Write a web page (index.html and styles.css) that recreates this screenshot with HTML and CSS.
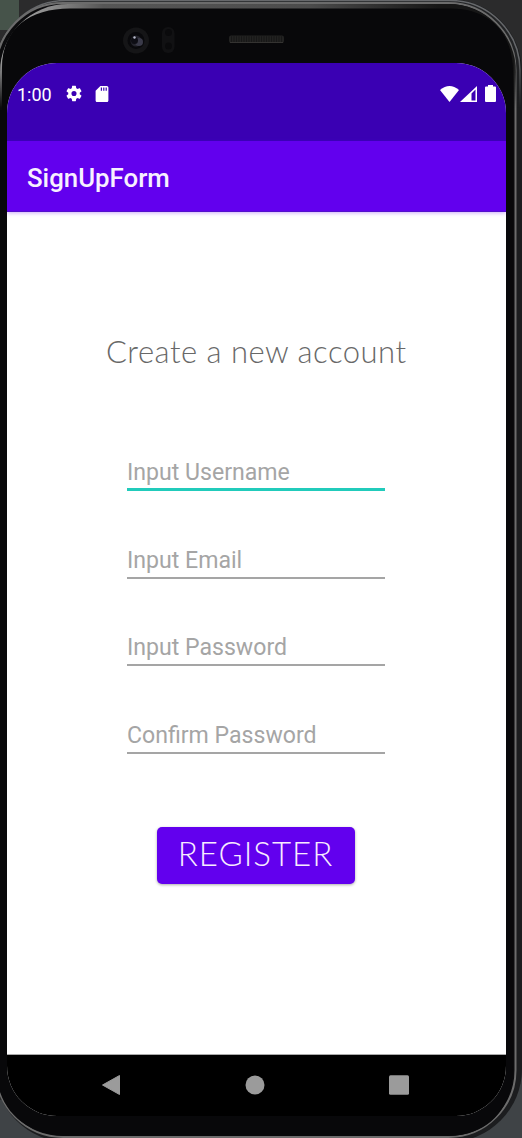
FILE: index.html
```html
<!DOCTYPE html>
<html lang="en">
<head>
<meta charset="utf-8">
<title>SignUpForm</title>
<link rel="stylesheet" href="styles.css">
</head>
<body>
<div class="device">
  <svg class="frame" viewBox="0 0 522 1138" aria-hidden="true">
    <defs>
      <linearGradient id="rim" x1="0" y1="0" x2="1" y2="0">
        <stop offset="0" stop-color="#aaa"/><stop offset=".1" stop-color="#8b8b8b"/><stop offset=".2" stop-color="#565656"/><stop offset=".6" stop-color="#4c4c4c"/><stop offset=".85" stop-color="#161616"/>
      </linearGradient>
      <linearGradient id="fade" x1="0" y1="0" x2="0" y2="1">
        <stop offset="0" stop-color="#fff"/><stop offset=".05" stop-color="#fff"/><stop offset=".095" stop-color="#000"/>
      </linearGradient>
      <mask id="top"><rect width="522" height="1138" fill="url(#fade)"/></mask>
    </defs>
    <rect width="522" height="1138" fill="#2b2b2c"/>
    <rect width="19" height="30" fill="#46534a"/>
    <path d="M0 1100H60V1138H0ZM470 1060H522V1138H470Z" fill="#3f4346"/>
    <rect x="-5" y="-1" width="527" height="1143" rx="73" fill="#1c1d1f"/>
    <rect x="-4" y=".5" width="524" height="1139" rx="70" fill="#232426" stroke="#66686b" stroke-width="1.500" mask="url(#top)"/>
    <rect x="-4" y="3" width="519.500" height="1134" rx="67" fill="#0b0b0d" stroke="#6c6c6c" stroke-width="2"/>
    <rect x="0" y="4" width="516" height="1133" rx="68" fill="url(#rim)" mask="url(#top)"/>
    <path d="M2 110V68C2 28 30 8.500 70 8.500H450C491 8.500 513 34 513 72V1066C513 1112 486 1136 446 1136H70C28 1136 -4 1112 -4 1066V110Z" fill="#08080a"/>
    <circle cx="136" cy="40.500" r="13" fill="#151517"/>
    <circle cx="136" cy="40.500" r="8.500" fill="#09090c"/>
    <circle cx="136" cy="41" r="5.500" fill="#24242c"/>
    <circle cx="139" cy="42" r="4" fill="#3a3a49"/>
    <circle cx="134.500" cy="40.500" r="3.500" fill="#0d0d14"/>
    <circle cx="134.500" cy="37.500" r="1.200" fill="#b9bccc"/>
    <rect x="162" y="27" width="12.500" height="26" rx="6" fill="#111113"/>
    <circle cx="168.500" cy="32.500" r="3.500" fill="#0a0a0c"/><circle cx="168.500" cy="46" r="3.500" fill="#0a0a0c"/>
    <rect x="229" y="35.500" width="55" height="7.500" rx="2" fill="#222221"/>
    <path d="M231 39.200H282" stroke="#171717" stroke-width="6" stroke-dasharray="1 1.500"/>
    <path d="M230 42.500H283" stroke="#343331"/>
  </svg>
  <main class="screen">
    <header class="status">
      <span class="clock">1:00</span>
      <svg class="gear" viewBox="2 2 20 20"><path fill="#fff" d="M19.140 12.940c.04-.3.060-.610.060-.940s-.02-.640-.07-.940l2.030-1.580a.49.49 0 0 0 .12-.610l-1.920-3.320a.488.488 0 0 0-.590-.220l-2.390.960c-.5-.380-1.030-.7-1.620-.940l-.360-2.540a.484.484 0 0 0-.480-.410h-3.840c-.240 0-.430.170-.470.410l-.360 2.540c-.590.240-1.130.570-1.620.940l-2.390-.960c-.220-.080-.470 0-.590.220L2.740 8.870c-.120.210-.080.470.120.610l2.030 1.580c-.05.3-.09.630-.09.940s.02.640.07.940l-2.030 1.580a.49.49 0 0 0-.12.610l1.920 3.320c.12.220.37.290.59.220l2.390-.96c.5.380 1.030.7 1.620.94l.36 2.540c.05.240.24.410.48.410h3.840c.24 0 .44-.17.47-.41l.36-2.540c.59-.24 1.130-.56 1.620-.94l2.390.96c.22.080.47 0 .59-.22l1.920-3.320a.49.49 0 0 0-.12-.61l-2.010-1.580zM12 15.200a3.200 3.200 0 1 1 0-6.400 3.200 3.200 0 0 1 0 6.400z"/></svg>
      <svg class="sd" viewBox="4 2 16 20"><path fill="#fff" d="M18 2h-8L4 8v12c0 1.100.9 2 2 2h12c1.100 0 2-.9 2-2V4c0-1.100-.9-2-2-2zm-6 6h-1.500V4H12v4zm3 0h-1.500V4H15v4zm3 0h-1.500V4H18v4z"/></svg>
      <span class="spacer"></span>
      <svg class="wifi" viewBox="0 0 19 16"><path fill="#fff" d="M0 4Q9.500-4 19 4L9.500 16Z"/></svg>
      <svg class="signal" viewBox="0 0 17 16"><path fill="#fff" fill-rule="evenodd" d="M0 16 17 0V16ZM11.500 7.500V14.500H15.500V3.500Z"/></svg>
      <svg class="battery" viewBox="0 0 11 17"><path fill="#fff" d="M3 0H8V1.500H10Q11 1.500 11 2.500V16Q11 17 10 17H1Q0 17 0 16V2.500Q0 1.500 1 1.500H3Z"/></svg>
    </header>
    <div class="appbar">SignUpForm</div>
    <form class="form">
      <h1 class="title">Create a new account</h1>
      <div class="field active">Input Username</div>
      <div class="field">Input Email</div>
      <div class="field">Input Password</div>
      <div class="field last">Confirm Password</div>
      <button class="register" type="button">REGISTER</button>
    </form>
    <nav class="nav">
      <svg viewBox="0 0 20 22"><path fill="#9b9b9b" stroke="#9b9b9b" stroke-linejoin="round" d="M1.500 11 18.500 1.500V20.500Z"/></svg>
      <svg viewBox="0 0 20 22"><circle cx="10" cy="11" r="9.500" fill="#9b9b9b"/></svg>
      <svg viewBox="0 0 20 22"><rect y="1.200" width="20" height="19.600" rx="1.500" fill="#9b9b9b"/></svg>
    </nav>
  </main>
</div>
</body>
</html>
```
FILE: styles.css
```css
* { box-sizing: border-box; }
body { margin: 0; background: #2b2b2c; font-family: Roboto, sans-serif; }
.device { position: relative; width: 522px; height: 1138px; padding: 63px 16px 22px 7px; overflow: hidden; }
.frame { position: absolute; inset: 0; width: 522px; height: 1138px; }
.screen { position: relative; display: flex; flex-direction: column; width: 499px; height: 1053px; overflow: hidden; border-radius: 50px; background: #fff; }
.status { display: flex; align-items: flex-start; height: 78px; padding: 22px 10px 0 10px; background: #3a00b3; color: #fff; }
.clock { width: 49px; font-size: 18px; line-height: 19px; }
.gear { width: 16px; height: 17px; }
.sd { width: 14px; height: 16px; margin: 1px 0 0 13px; }
.spacer { flex: 1; }
.wifi { width: 19px; height: 16px; margin-top: 1px; }
.signal { width: 17px; height: 16px; margin: 1px 8px 0 1px; }
.battery { width: 11px; height: 17px; }
.appbar { flex: none; height: 71px; padding-left: 20px; background: #6200ee; border-bottom: 1px solid #5310cc; box-shadow: 0 1px 4px #6200ee55; color: #f7f0ff; font-size: 25.800px; font-weight: 500; line-height: 75px; }
.form { flex: 1; display: flex; flex-direction: column; align-items: center; padding-right: 2px; }
.title { width: 301px; height: 40px; margin: 119px 0 84px 2px; color: #686868; font-family: "Coming Soon", Lato, sans-serif; font-size: 31px; font-weight: 300; line-height: 40px; letter-spacing: .5px; white-space: nowrap; }
.field { width: 258px; height: 36px; margin-bottom: 51.600px; margin-left: 1px; border-bottom: 2px solid #a5a5a5; color: #a5a5a5; font-size: 23.100px; line-height: 36px; white-space: nowrap; }
.active { border-bottom: 3px solid #21cbbb; }
.last { margin-bottom: 74px; }
.register { width: 198px; height: 57px; margin-top: -1px; padding: 0 0 4px; border: 0; border-radius: 5px; background: #6200ee; box-shadow: 0 1px 3px #0005; color: #f8ecff; font-family: "Coming Soon", Lato, sans-serif; font-size: 33px; font-weight: 300; letter-spacing: 1px; }
.nav { display: flex; justify-content: space-between; align-items: center; height: 62px; padding: 0 97px 2px 94px; border-top: 1px solid #aaa; background: #000; }
.nav svg { width: 20px; height: 22px; }
```
